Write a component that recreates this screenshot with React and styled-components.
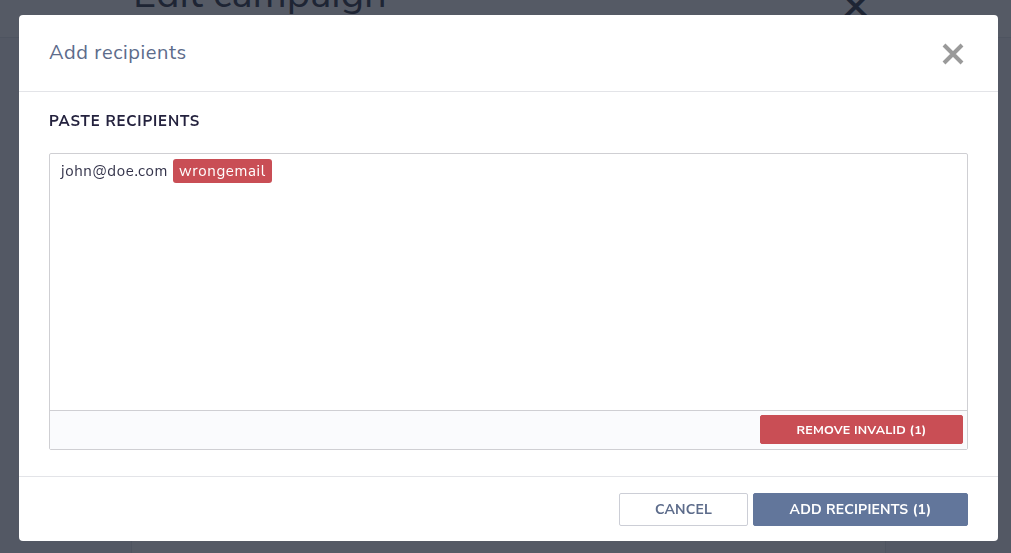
import React from 'react';
import styled, { createGlobalStyle } from 'styled-components';

const Global = createGlobalStyle`
    html, body { margin:0; padding:0; height:100%; overflow:hidden; }
    body { font-family:"Nunito Sans", Lato, "Open Sans", sans-serif; background:#f4f5f8; }
    * { box-sizing:border-box; }
`;

const Page = styled.div`
    height:553px; overflow:hidden;
`;

const PageHeader = styled.div`
    height:38px; overflow:hidden; background:#fff;
    border-bottom:1px solid #e2e4ea;
    display:flex; justify-content:space-between; align-items:flex-start;
    padding:0 138px 0 133px;
    h1 { margin:-30px 0 0; font-size:40px; font-weight:400; color:#1c2234; line-height:48px; }
    span { margin-top:-19px; font-size:40px; color:#1c2234; }
`;

const PageCard = styled.div`
    margin:0 125px 0 131px; height:515px; background:#fff;
    border-left:1px solid #e2e4ea; border-right:1px solid #e2e4ea;
`;

const Overlay = styled.div`
    position:fixed; inset:0; background:rgba(32,38,52,0.76);
    display:flex; align-items:flex-start;
`;

const Modal = styled.div`
    margin:15px 0 0 19px; width:979px; height:526px;
    background:#fff; border-radius:4px;
    display:flex; flex-direction:column;
`;

const Head = styled.div`
    height:77px; flex:none; padding:0 33px 0 30px; border-bottom:1px solid #e3e4e8;
    display:flex; justify-content:space-between; align-items:center;
    h2 { margin:0 0 1px; font-size:20px; font-weight:400; color:#5d6c8b; letter-spacing:0.6px; }
`;

const Close = styled.button`
    border:0; background:none; padding:0; cursor:pointer; display:flex;
    margin-top:2px;
`;

const Body = styled.div`
    flex:1; padding:19px 30px 26px;
    border-bottom:1px solid #e3e4e8;
`;

const Label = styled.div`
    font-size:15px; font-weight:700; color:#24223e; letter-spacing:0.85px;
    line-height:20px; margin-bottom:22px;
`;

const Box = styled.div`
    border:1px solid #cfcfd3; border-radius:2px;
    display:flex; flex-direction:column; height:297px;
`;

const Entries = styled.div`
    flex:1; padding:5px 11px; display:flex; align-items:flex-start; gap:5px;
    font-size:15px; color:#33334a; line-height:24px; letter-spacing:0.65px;
    border-bottom:1px solid #cfcfd3;
`;

const Entry = styled.span`
    padding:${p => p.$bad ? '0 6px' : '0'};
    border-radius:3px;
    background:${p => p.$bad ? '#c94e55' : 'transparent'};
    color:${p => p.$bad ? '#fff' : 'inherit'};
`;

const Strip = styled.div`
    height:38px; background:#fafbfd; padding:4px 4px 4px 0;
    display:flex; justify-content:flex-end;
`;

const Button = styled.button`
    font-family:inherit; font-size:${p => p.$small ? '12.5px' : '14px'}; font-weight:700;
    text-transform:uppercase; letter-spacing:0.2px;
    height:${p => p.$small ? '29px' : '33px'}; width:${p => p.$w};
    border-radius:2px; cursor:pointer;
    border:1px solid ${p => p.$variant === 'danger' ? '#c94e55' : p.$variant === 'primary' ? '#62769b' : '#ccced6'};
    background:${p => p.$variant === 'danger' ? '#c94e55' : p.$variant === 'primary' ? '#62769b' : '#fff'};
    color:${p => p.$variant ? '#fff' : '#5d6c8b'};
`;

const Foot = styled.div`
    height:66px; flex:none; padding:0 30px 2px; display:flex; justify-content:flex-end;
    align-items:center; gap:5px;
`;

const App = () => {
    return (
        <Page>
            <Global />
            <PageHeader>
                <h1>Edit campaign</h1>
                <span>✕</span>
            </PageHeader>
            <PageCard />
            <Overlay>
                <Modal>
                    <Head>
                        <h2>Add recipients</h2>
                        <Close aria-label="close">
                            <svg width="24" height="24" viewBox="0 0 24 24">
                                <path d="M3 3 L21 21 M21 3 L3 21" stroke="#9a9a9a" strokeWidth="4" strokeLinecap="butt" />
                            </svg>
                        </Close>
                    </Head>
                    <Body>
                        <Label>PASTE RECIPIENTS</Label>
                        <Box>
                            <Entries>
                                <Entry>john@doe.com</Entry>
                                <Entry $bad>wrongemail</Entry>
                            </Entries>
                            <Strip>
                                <Button $small $variant="danger" $w="203px">Remove invalid (1)</Button>
                            </Strip>
                        </Box>
                    </Body>
                    <Foot>
                        <Button $w="129px">Cancel</Button>
                        <Button $variant="primary" $w="215px">Add recipients (1)</Button>
                    </Foot>
                </Modal>
            </Overlay>
        </Page>
    );
};

export default App;
